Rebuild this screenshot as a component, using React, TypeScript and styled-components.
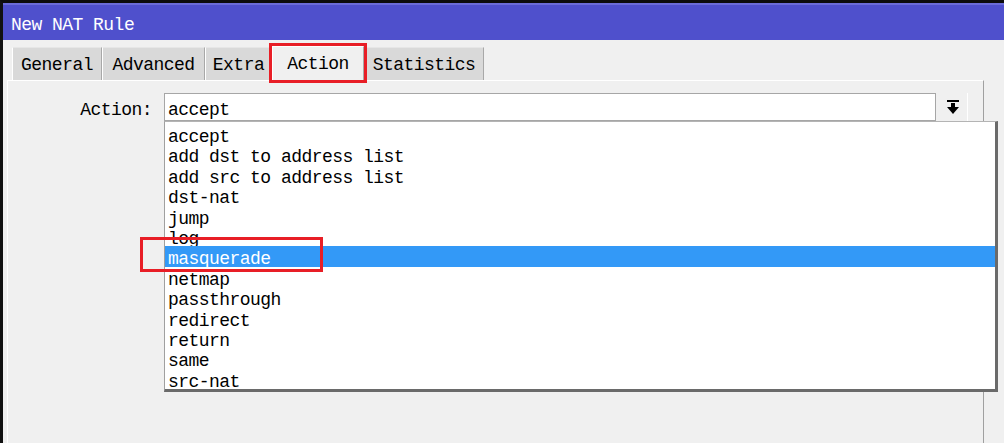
import React from 'react'
import styled, { createGlobalStyle } from 'styled-components'

const GlobalStyle = createGlobalStyle`
    html, body {
        margin: 0;
        padding: 0;
        background: #f0f0f0;
    }
    body {
        font-family: "Liberation Mono", "DejaVu Sans Mono", monospace;
        font-size: 18px;
        letter-spacing: -0.54px;
        color: #000;
    }
`;

const Window = styled.div`
    display: flex;
    flex-direction: column;
    width: 1004px;
    height: 443px;
    box-sizing: border-box;
    border-left: 3px solid #111;
    border-top: 3px solid #0c0c0c;
    background: #f0f0f0;
    overflow: hidden;
`;

const TitleBar = styled.div`
    display: flex;
    align-items: center;
    height: 37px;
    box-sizing: border-box;
    padding: 5px 0 0 8px;
    border-top: 2px solid #6b6cd8;
    background: #4f50cc;
    color: #fff;
`;

const Body = styled.div`
    flex: 1;
    display: flex;
    flex-direction: column;
    padding: 6px 20px 0 4px;
`;

const TabStrip = styled.div`
    display: flex;
    align-items: flex-end;
    height: 34px;
    padding-left: 5px;
`;

const Tab = styled.div<{ $width: number; $active?: boolean }>`
    position: relative;
    display: flex;
    align-items: center;
    justify-content: center;
    width: ${props => props.$width}px;
    height: ${props => props.$active ? 34 : 33}px;
    box-sizing: border-box;
    padding-top: ${props => props.$active ? 0 : 2}px;
    background: ${props => props.$active ? '#f0f0f0' : '#d9d9d9'};
    border-top: 1px solid ${props => props.$active ? '#fff' : '#e6e6e6'};
    border-left: 1px solid #fff;
    border-right: 1px solid #a8a8a8;
    z-index: ${props => props.$active ? 1 : 0};
    outline: ${props => props.$active ? '3px solid #e81e26' : 'none'};
`;

const Panel = styled.div`
    flex: 1;
    position: relative;
    border-top: 1px solid #fff;
    border-left: 1px solid #fff;
    border-right: 1px solid #a0a0a0;
`;

const FieldRow = styled.div`
    display: flex;
    align-items: center;
    padding-top: 12px;
`;

const Label = styled.div`
    width: 144px;
    margin-right: 12px;
    padding-top: 6px;
    text-align: right;
`;

const Combo = styled.div`
    position: relative;
    display: flex;
    gap: 2px;
`;

const Field = styled.div`
    display: flex;
    align-items: center;
    width: 772px;
    height: 28px;
    box-sizing: border-box;
    padding: 6px 0 0 3px;
    border: 1px solid #a6a6a6;
    background: #fff;
`;

const DropButton = styled.div`
    display: flex;
    align-items: center;
    justify-content: center;
    width: 30px;
    height: 28px;
    box-sizing: border-box;
    border-right: 1px solid #fff;
    background: #f0f0f0;
`;

const DropList = styled.ul`
    position: absolute;
    top: 28px;
    left: 0;
    width: 834px;
    margin: 0;
    padding: 2px 0 0;
    list-style: none;
    box-sizing: border-box;
    background: #fff;
    border-left: 1px solid #a0a0a0;
    border-top: 1px solid #b4b4b4;
    border-right: 3px solid #6a6a6a;
    border-bottom: 3px solid #6a6a6a;
    z-index: 2;
`;

const Option = styled.li<{ $selected?: boolean }>`
    position: relative;
    height: 20.4px;
    box-sizing: border-box;
    padding: 3px 0 0 3px;
    line-height: 20.4px;
    white-space: nowrap;
    background: ${props => props.$selected ? '#3399f7' : 'transparent'};
    color: ${props => props.$selected ? '#fff' : '#000'};
`;

const Marker = styled.span`
    position: absolute;
    left: -25px;
    top: -9px;
    width: 183px;
    height: 35px;
    box-sizing: border-box;
    border: 3px solid #e81e26;
    pointer-events: none;
`;

const tabs = [
    { label: 'General', width: 90 },
    { label: 'Advanced', width: 103 },
    { label: 'Extra', width: 67 },
    { label: 'Action', width: 92, active: true },
    { label: 'Statistics', width: 120 },
];

const actions = [
    'accept',
    'add dst to address list',
    'add src to address list',
    'dst-nat',
    'jump',
    'log',
    'masquerade',
    'netmap',
    'passthrough',
    'redirect',
    'return',
    'same',
    'src-nat',
];

const App = () => {
    return (
        <>
            <GlobalStyle />
            <Window>
                <TitleBar>New NAT Rule</TitleBar>
                <Body>
                    <TabStrip>
                        {tabs.map(tab => (
                            <Tab key={tab.label} $width={tab.width} $active={tab.active}>
                                {tab.label}
                            </Tab>
                        ))}
                    </TabStrip>
                    <Panel>
                        <FieldRow>
                            <Label>Action:</Label>
                            <Combo>
                                <Field>accept</Field>
                                <DropButton>
                                    <svg width="14" height="15" viewBox="0 0 14 15">
                                        <rect x="1" y="0" width="12" height="2" fill="#000" />
                                        <rect x="5" y="3" width="4" height="5" fill="#000" />
                                        <polygon points="1,7 13,7 7,14" fill="#000" />
                                    </svg>
                                </DropButton>
                                <DropList>
                                    {actions.map(a => (
                                        <Option key={a} $selected={a === 'masquerade'}>
                                            {a}
                                            {a === 'masquerade' && <Marker />}
                                        </Option>
                                    ))}
                                </DropList>
                            </Combo>
                        </FieldRow>
                    </Panel>
                </Body>
            </Window>
        </>
    )
}

export default App
